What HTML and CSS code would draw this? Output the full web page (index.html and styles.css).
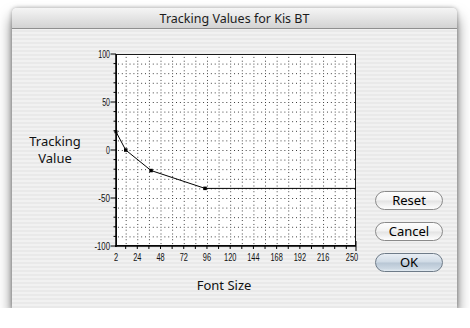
FILE: index.html
```html
<!DOCTYPE html>
<html lang="en">
<head>
  <meta charset="UTF-8" />
  <title>Tracking Values for Kis BT</title>
  <link rel="stylesheet" href="styles.css">
</head>
<body>

  <div class="window">
    <div class="titlebar">Tracking Values for Kis BT</div>

    <div class="content">
      <div class="ylabel">Tracking<br>Value</div>

      <svg class="chart" width="272" height="220" viewBox="0 0 272 220">
        <defs>
          <pattern id="dots" patternUnits="userSpaceOnUse" x="24.065" y="9" width="11.613" height="9.6">
            <rect x="0" y="0" width="1" height="1" />
            <rect x="3.871" y="0" width="1" height="1" />
            <rect x="7.742" y="0" width="1" height="1" />
            <rect x="0" y="3.2" width="1" height="1" />
            <rect x="0" y="6.4" width="1" height="1" />
          </pattern>
        </defs>

        <!-- plot area -->
        <rect x="26" y="9" width="240" height="192" fill="#fff" />
        <rect x="26" y="9" width="240" height="192" fill="url(#dots)" />
        <rect x="26.5" y="9.5" width="239" height="191" fill="none" stroke="#1a1a1a" stroke-width="1" />
        <line x1="26" y1="9" x2="26" y2="202" stroke="#000" stroke-width="1.5" />
        <line x1="25" y1="201" x2="266" y2="201" stroke="#000" stroke-width="1.5" />

        <g id="yticks" stroke="#000" stroke-width="1"></g>
        <g id="xticks" stroke="#000" stroke-width="1"></g>
        <g id="ylabels" class="axis-text"></g>
        <g id="xlabels" class="axis-text"></g>

        <!-- data -->
        <polyline points="26,86.8 35.7,105 61,125.5 115,143.4 266,143.4" fill="none" stroke="#000" stroke-width="1" />
        <rect x="24.5" y="85.3" width="3" height="3" fill="#000" />
        <rect x="34" y="103.3" width="3.5" height="3.5" fill="#000" />
        <rect x="59.3" y="123.8" width="3.5" height="3.5" fill="#000" />
        <rect x="113.3" y="141.6" width="3.5" height="3.5" fill="#000" />
      </svg>

      <div class="buttons">
        <button class="btn">Reset</button>
        <button class="btn">Cancel</button>
        <button class="btn default">OK</button>
      </div>
    </div>

    <div class="xlabel">Font Size</div>
  </div>

  <script>
    const ns = 'http://www.w3.org/2000/svg';
    const px = u => 26 + (u - 2) * 240 / 248;
    const py = v => 105 - v * 0.96;

    function el(parent, name, attrs, text) {
      const node = document.createElementNS(ns, name);
      for (const k in attrs) node.setAttribute(k, attrs[k]);
      if (text !== undefined) node.textContent = text;
      document.getElementById(parent).appendChild(node);
    }

    // y axis ticks every 10, labels every 50
    for (let v = -100; v <= 100; v += 10) {
      const y = py(v);
      const major = v % 50 === 0;
      el('yticks', 'line', { x1: major ? 20.5 : 23.5, y1: y, x2: 26, y2: y });
      if (major) {
        const s = String(v);
        el('ylabels', 'text', {
          x: 20, y: y + 3.5, 'text-anchor': 'end',
          textLength: s.length * 3.9, lengthAdjust: 'spacingAndGlyphs'
        }, s);
      }
    }

    // x axis ticks every 12 units
    for (let u = 12; u < 250; u += 12) {
      el('xticks', 'line', { x1: px(u), y1: 201, x2: px(u), y2: 204 });
    }
    el('xticks', 'line', { x1: 266, y1: 196, x2: 266, y2: 206 });

    [2, 24, 48, 72, 96, 120, 144, 168, 192, 216, 250].forEach(u => {
      const s = String(u);
      const x = u === 250 ? 262 : px(u);
      el('xlabels', 'text', {
        x: x, y: 216, 'text-anchor': 'middle',
        textLength: s.length * 4.1, lengthAdjust: 'spacingAndGlyphs'
      }, s);
    });
  </script>
</body>
</html>
```

FILE: styles.css
```css
body { margin: 0; background: #fff; font-family: "Noto Sans", "DejaVu Sans", sans-serif; color: #111; }

.window {
  margin: 8px 0 0 12px;
  width: 445px;
  height: 300px;
  border-radius: 5px 5px 0 0;
  background: repeating-linear-gradient(to bottom, #f1f1f1 0, #f1f1f1 2px, #e9e9e9 2px, #e9e9e9 4px);
  box-shadow: 0 9px 14px rgba(0,0,0,0.55), 0 0 4px rgba(0,0,0,0.35);
  overflow: hidden;
}

.titlebar {
  height: 20px;
  line-height: 21px;
  border-bottom: 1px solid #8f8f8f;
  background: linear-gradient(#f5f5f5, #e4e4e4 50%, #d3d3d3);
  text-align: center;
  font-size: 12.5px;
  color: #1c1c1c;
}

.content { display: flex; align-items: flex-start; padding-top: 16px; }

.ylabel {
  width: 70px;
  padding-left: 8px;
  margin-top: 88px;
  text-align: center;
  font-size: 13px;
  line-height: 17px;
}

.chart { display: block; }
.chart pattern rect { fill: #333; shape-rendering: crispEdges; }
.axis-text { font-family: "Liberation Sans", sans-serif; font-size: 10px; fill: #111; }

.buttons { display: flex; flex-direction: column; gap: 12px; margin: 146px 0 0 13px; }

.btn {
  box-sizing: border-box;
  width: 68px;
  height: 19px;
  padding: 0;
  border: 1px solid #8a8a8a;
  border-radius: 10px;
  background: linear-gradient(#fdfdfd 0%, #f2f2f2 48%, #e3e3e3 52%, #f6f6f6 85%, #fdfdfd 100%);
  font-family: inherit;
  font-size: 13px;
  line-height: 17px;
  color: #000;
}
.btn.default {
  border-color: #6e7b88;
  background: linear-gradient(#e8eef4 0%, #cfdae5 48%, #b8c6d4 52%, #cbd7e2 85%, #e2eaf1 100%);
}

.xlabel {
  margin: 6px 0 0 78px;
  width: 268px;
  text-align: center;
  font-size: 13px;
  line-height: 15px;
}
```
